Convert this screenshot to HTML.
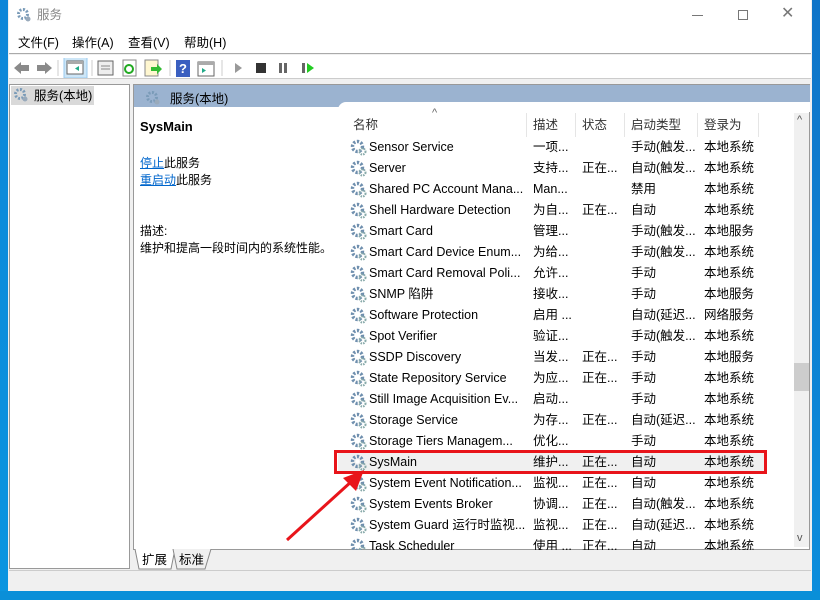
<!DOCTYPE html>
<html><head><meta charset="utf-8"><style>
*{margin:0;padding:0;box-sizing:border-box}
body{width:820px;height:600px;overflow:hidden;background:#0a7fd0;font-family:"Liberation Sans","Noto Sans CJK SC",sans-serif;font-size:12px;color:#000;position:relative;line-height:15px}
.a{position:absolute}
.win{left:8px;top:0;width:804px;height:591px;background:#f0f0f0}
.t{white-space:nowrap}
.row{position:absolute;left:0;height:21px;width:440px}
.row span{position:absolute;top:3px;white-space:nowrap;font-size:12.5px;line-height:15px;height:15px}
</style></head><body>
<div class="a" style="left:0;top:0;width:8px;height:600px;background:linear-gradient(#0e86d8,#0a95e0)"></div>
<div class="a" style="left:812px;top:0;width:8px;height:600px;background:linear-gradient(#0f74c8,#0b8ddc)"></div>
<div class="a" style="left:0;top:591px;width:820px;height:9px;background:#0a8fd8"></div>
<div class="a win"></div>
<!-- title -->
<div class="a" style="left:9px;top:0;width:802px;height:30px;background:#fff"></div>
<svg class="a" style="left:16px;top:7px" width="16" height="16" viewBox="0 0 16 16"><circle cx="7" cy="7" r="4.5" fill="none" stroke="#7a9bb8" stroke-width="3" stroke-dasharray="2 1.5"/><circle cx="7" cy="7" r="2" fill="#fff"/><circle cx="12" cy="12" r="2.5" fill="#9ab"/></svg>
<div class="a t" style="left:37px;top:8px;font-size:12.5px;color:#888">服务</div>
<div class="a" style="left:692px;top:15px;width:11px;height:1px;background:#777"></div>
<div class="a" style="left:738px;top:10px;width:10px;height:10px;border:1px solid #777"></div>
<div class="a t" style="left:781px;top:6px;font-size:16px;color:#777">✕</div>
<!-- menu -->
<div class="a" style="left:9px;top:30px;width:802px;height:24px;background:#fff;border-bottom:1px solid #aaa"></div>
<div class="a t" style="left:18px;top:36px;font-size:12.5px">文件(F)</div>
<div class="a t" style="left:72px;top:36px;font-size:12.5px">操作(A)</div>
<div class="a t" style="left:128px;top:36px;font-size:12.5px">查看(V)</div>
<div class="a t" style="left:184px;top:36px;font-size:12.5px">帮助(H)</div>
<!-- toolbar -->
<div class="a" style="left:9px;top:55px;width:802px;height:24px;background:#fff;border-bottom:1px solid #ccc"></div>
<svg class="a" style="left:12px;top:58px" width="320" height="20">
<path d="M2 10 L9 4 V7 H17 V13 H9 V16Z" fill="#8a8a8a"/>
<path d="M40 10 L33 4 V7 H25 V13 H33 V16Z" fill="#8a8a8a"/>
<line x1="46" y1="2" x2="46" y2="18" stroke="#ccc"/>
<rect x="52" y="-1" width="23" height="21" fill="#cde6f7" stroke="#99c9ef"/>
<rect x="55" y="3" width="16" height="13" fill="#fff" stroke="#666"/><rect x="55" y="3" width="16" height="3" fill="#aaa"/><path d="M67 8 L63 10.5 L67 13Z" fill="#2a8"/>
<line x1="80" y1="2" x2="80" y2="18" stroke="#ccc"/>
<rect x="86" y="3" width="15" height="14" fill="#eee" stroke="#666"/><line x1="89" y1="8" x2="98" y2="8" stroke="#888"/><line x1="89" y1="11" x2="98" y2="11" stroke="#888"/>
<rect x="111" y="2" width="13" height="16" fill="#fff" stroke="#888"/><circle cx="117" cy="11" r="4" fill="none" stroke="#2a2" stroke-width="2"/>
<rect x="133" y="2" width="13" height="16" fill="#fff7d0" stroke="#888"/><path d="M139 9 H145 V6 L150 11 L145 16 V13 H139Z" fill="#3b3"/>
<line x1="158" y1="2" x2="158" y2="18" stroke="#ccc"/>
<rect x="164" y="2" width="14" height="17" fill="#3a5fc0"/><text x="167" y="15" fill="#fff" font-size="13" font-weight="bold" font-family="Liberation Sans">?</text>
<rect x="186" y="4" width="16" height="14" fill="#fff" stroke="#666"/><rect x="186" y="4" width="16" height="3" fill="#aaa"/><path d="M190 10 L194 12.5 L190 15Z" fill="#2a8"/>
<line x1="210" y1="2" x2="210" y2="18" stroke="#ccc"/>
<path d="M223 5 L230 10 L223 15Z" fill="#999"/>
<rect x="244" y="5" width="10" height="10" fill="#333"/>
<rect x="267" y="5" width="3" height="10" fill="#666"/><rect x="272" y="5" width="3" height="10" fill="#666"/>
<rect x="290" y="5" width="3" height="10" fill="#666"/><path d="M295 5 L302 10 L295 15Z" fill="#2c2"/>
</svg>
<!-- left pane -->
<div class="a" style="left:9px;top:84px;width:121px;height:485px;background:#fff;border:1px solid #999"></div>
<div class="a" style="left:11px;top:86px;width:83px;height:19px;background:#d9d9d9"></div>
<svg class="a" style="left:13px;top:87px" width="16" height="16" viewBox="0 0 16 16"><circle cx="7" cy="7" r="4.5" fill="none" stroke="#7a9bb8" stroke-width="3" stroke-dasharray="2 1.5"/><circle cx="12" cy="12" r="2.5" fill="#9ab"/></svg>
<div class="a t" style="left:34px;top:89px;font-size:12.5px">服务(本地)</div>
<!-- main pane -->
<div class="a" style="left:133px;top:84px;width:677px;height:466px;background:#fff;border:1px solid #999"></div>
<div class="a" style="left:134px;top:85px;width:676px;height:22px;background:#9bb3d0"></div>
<svg class="a" style="left:145px;top:90px" width="16" height="16" viewBox="0 0 16 16"><circle cx="7" cy="7" r="4.5" fill="none" stroke="#7a9bb8" stroke-width="3" stroke-dasharray="2 1.5"/><circle cx="12" cy="12" r="2.5" fill="#9ab"/></svg>
<div class="a t" style="left:170px;top:92px;font-size:12.5px">服务(本地)</div>
<div class="a" style="left:338px;top:102px;width:472px;height:10px;background:#fff;border-top-left-radius:8px"></div>
<div class="a t" style="left:140px;top:119px;font-size:13px;font-weight:bold">SysMain</div>
<div class="a t" style="left:140px;top:156px;font-size:12px"><span style="color:#0066cc;text-decoration:underline">停止</span>此服务</div>
<div class="a t" style="left:140px;top:173px;font-size:12px"><span style="color:#0066cc;text-decoration:underline">重启动</span>此服务</div>
<div class="a t" style="left:140px;top:224px;font-size:12px">描述:</div>
<div class="a t" style="left:140px;top:241px;font-size:12px">维护和提高一段时间内的系统性能。</div>
<!-- list header -->
<div class="a t" style="left:432px;top:106px;font-size:11px;color:#666">^</div>
<div class="a t" style="left:353px;top:118px;font-size:12.5px;color:#333">名称</div>
<div class="a t" style="left:533px;top:118px;font-size:12.5px;color:#333">描述</div>
<div class="a t" style="left:582px;top:118px;font-size:12.5px;color:#333">状态</div>
<div class="a t" style="left:631px;top:118px;font-size:12.5px;color:#333">启动类型</div>
<div class="a t" style="left:704px;top:118px;font-size:12.5px;color:#333">登录为</div>
<div class="a" style="left:526px;top:113px;width:1px;height:24px;background:#e5e5e5"></div>
<div class="a" style="left:575px;top:113px;width:1px;height:24px;background:#e5e5e5"></div>
<div class="a" style="left:624px;top:113px;width:1px;height:24px;background:#e5e5e5"></div>
<div class="a" style="left:697px;top:113px;width:1px;height:24px;background:#e5e5e5"></div>
<div class="a" style="left:758px;top:113px;width:1px;height:24px;background:#e5e5e5"></div>
<!-- scrollbar -->
<div class="a" style="left:794px;top:113px;width:15px;height:434px;background:#f0f0f0"></div>
<div class="a" style="left:794px;top:363px;width:15px;height:28px;background:#cdcdcd"></div>
<div class="a t" style="left:797px;top:113px;font-size:11px;color:#555">^</div>
<div class="a t" style="left:797px;top:531px;font-size:11px;color:#555">v</div>
<!-- rows -->
<div class="a" id="list" style="left:338px;top:137px;width:455px;height:413px;overflow:hidden">
<div class="a" style="left:0;top:314px;width:428px;height:21px;background:#f0f0f0"></div>
<div id="rows"></div>
</div>
<script>
var d=[["Sensor Service","一项...","","手动(触发...","本地系统"],["Server","支持...","正在...","自动(触发...","本地系统"],["Shared PC Account Mana...","Man...","","禁用","本地系统"],["Shell Hardware Detection","为自...","正在...","自动","本地系统"],["Smart Card","管理...","","手动(触发...","本地服务"],["Smart Card Device Enum...","为给...","","手动(触发...","本地系统"],["Smart Card Removal Poli...","允许...","","手动","本地系统"],["SNMP 陷阱","接收...","","手动","本地服务"],["Software Protection","启用 ...","","自动(延迟...","网络服务"],["Spot Verifier","验证...","","手动(触发...","本地系统"],["SSDP Discovery","当发...","正在...","手动","本地服务"],["State Repository Service","为应...","正在...","手动","本地系统"],["Still Image Acquisition Ev...","启动...","","手动","本地系统"],["Storage Service","为存...","正在...","自动(延迟...","本地系统"],["Storage Tiers Managem...","优化...","","手动","本地系统"],["SysMain","维护...","正在...","自动","本地系统"],["System Event Notification...","监视...","正在...","自动","本地系统"],["System Events Broker","协调...","正在...","自动(触发...","本地系统"],["System Guard 运行时监视...","监视...","正在...","自动(延迟...","本地系统"],["Task Scheduler","使用 ...","正在...","自动","本地系统"]];
var g='<svg style="position:absolute;left:12px;top:2px" width="17" height="17" viewBox="0 0 17 17"><circle cx="7.5" cy="7.5" r="5" fill="none" stroke="#6f8fae" stroke-width="3.4" stroke-dasharray="2.2 1.6"/><circle cx="7.5" cy="7.5" r="2" fill="#fff"/><circle cx="12.5" cy="12.5" r="3" fill="none" stroke="#8aa" stroke-width="2" stroke-dasharray="1.5 1"/></svg>';
var h='';d.forEach(function(r,i){h+='<div class="row" style="top:'+(i*21)+'px">'+g+'<span style="left:31px">'+r[0]+'</span><span style="left:195px">'+r[1]+'</span><span style="left:244px">'+r[2]+'</span><span style="left:293px">'+r[3]+'</span><span style="left:366px">'+r[4]+'</span></div>'});
document.getElementById('rows').innerHTML=h;
</script>
<!-- highlight & arrow -->
<div class="a" style="left:334px;top:450px;width:433px;height:24px;border:3px solid #e8141a"></div>
<svg class="a" style="left:0;top:0" width="820" height="600"><line x1="287" y1="540" x2="352" y2="481" stroke="#e8141a" stroke-width="3"/><path d="M364 470 L343 478 L356 491Z" fill="#e8141a"/></svg>
<!-- tabs -->
<svg class="a" style="left:133px;top:549px" width="120" height="22"><path d="M2 0 L6 20 H38 L42 0" fill="#fff" stroke="#888"/><path d="M40 0 L44 20 H72 L78 0" fill="#f0f0f0" stroke="#888"/><text x="9" y="15" font-size="12.5" font-family="Noto Sans CJK SC">扩展</text><text x="46" y="15" font-size="12.5" font-family="Noto Sans CJK SC">标准</text></svg>
<div class="a" style="left:9px;top:570px;width:802px;height:1px;background:#ccc"></div>
</body></html>
